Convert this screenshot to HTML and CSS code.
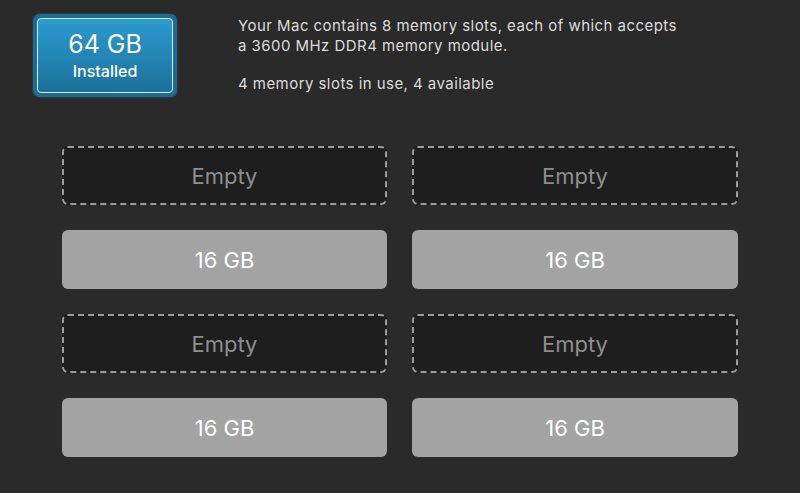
FILE: index.html
```html
<!DOCTYPE html>
<html>
<head>
<meta charset="utf-8">
<link rel="stylesheet" href="styles.css">
</head>
<body>
<div class="page">
  <div class="top">
    <div class="badge">
      <div class="badge-inner">
        <div class="badge-size">64 GB</div>
        <div class="badge-label">Installed</div>
      </div>
    </div>
    <div class="info">
      <p class="info-line">Your Mac contains 8 memory slots, each of which accepts<br>a 3600 MHz DDR4 memory module.</p>
      <p class="info-line second">4 memory slots in use, 4 available</p>
    </div>
  </div>
  <div class="slots">
    <div class="slot empty">Empty</div>
    <div class="slot empty">Empty</div>
    <div class="slot filled">16 GB</div>
    <div class="slot filled">16 GB</div>
    <div class="slot empty">Empty</div>
    <div class="slot empty">Empty</div>
    <div class="slot filled">16 GB</div>
    <div class="slot filled">16 GB</div>
  </div>
</div>
</body>
</html>
```
FILE: styles.css
```css
html, body {
  margin: 0;
  padding: 0;
  background: #2a2a2a;
}
body {
  font-family: Inter, "Liberation Sans", sans-serif;
  width: 800px;
  height: 493px;
  overflow: hidden;
}
.page {
  padding-top: 14px;
}
.top {
  display: flex;
  align-items: flex-start;
  padding-left: 33px;
}
.badge {
  width: 144px;
  height: 83px;
  box-sizing: border-box;
  border-radius: 7px;
  background: #1d6a93;
  padding: 4px;
  box-shadow: 0 0 2px rgba(40, 140, 200, 0.6);
}
.badge-inner {
  height: 100%;
  box-sizing: border-box;
  border: 1.5px solid #d8ecf6;
  border-radius: 4px;
  background: linear-gradient(#2b9bd0, #1b7199);
  display: flex;
  flex-direction: column;
  align-items: center;
  color: #ffffff;
}
.badge-size {
  font-size: 25px;
  line-height: 30px;
  margin-top: 10px;
}
.badge-label {
  font-size: 16px;
  line-height: 20px;
  margin-top: 2px;
  font-weight: 500;
}
.info {
  margin-left: 61px;
  padding-top: 2px;
}
.info-line {
  margin: 0;
  color: #dcdcdc;
  font-size: 15px;
  letter-spacing: 0.45px;
  line-height: 20px;
}
.info-line.second {
  margin-top: 18px;
}
.slots {
  display: grid;
  grid-template-columns: 325px 326px;
  grid-auto-rows: 59px;
  column-gap: 25px;
  row-gap: 25px;
  padding-left: 62px;
  margin-top: 49px;
}
.slot {
  display: flex;
  align-items: center;
  justify-content: center;
  font-size: 22px;
  box-sizing: border-box;
  border-radius: 6px;
}
.slot.empty {
  background: #1e1e1e;
  border: 2px dashed #9c9c9c;
  color: #8e8e8e;
}
.slot.filled {
  background: #a3a3a3;
  color: #ffffff;
}
```
